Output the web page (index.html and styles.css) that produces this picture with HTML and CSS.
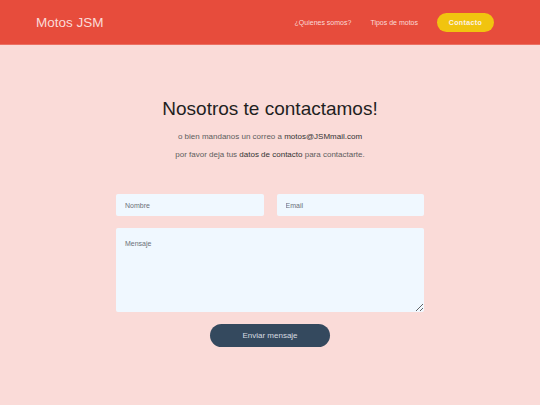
FILE: index.html
```html
<!DOCTYPE html>
<html lang="es">
<head>
<meta charset="utf-8">
<title>Motos JSM</title>
<link rel="stylesheet" href="styles.css">
</head>
<body>
<header class="header">
  <div class="logo">Motos JSM</div>
  <nav class="nav">
    <a class="nav-link" href="#">¿Quienes somos?</a>
    <a class="nav-link" href="#">Tipos de motos</a>
    <a class="nav-btn" href="#">Contacto</a>
  </nav>
</header>
<main class="main">
  <h1 class="title">Nosotros te contactamos!</h1>
  <p class="text">o bien mandanos un correo a <span class="strong">motos@JSMmail.com</span></p>
  <p class="text">por favor deja tus <span class="strong">datos de contacto</span> para contactarte.</p>
  <form class="form">
    <div class="row">
      <input class="field" type="text" placeholder="Nombre">
      <input class="field" type="email" placeholder="Email">
    </div>
    <textarea class="field area" placeholder="Mensaje"></textarea>
    <button class="send" type="button">Enviar mensaje</button>
  </form>
</main>
</body>
</html>
```
FILE: styles.css
```css
* { box-sizing: border-box; }
body {
  margin: 0;
  background: #fadbd8;
  font-family: "Liberation Sans", Arial, sans-serif;
  min-height: 405px;
}
.header {
  height: 45px;
  background: #e74c3c;
  border-bottom: 1px solid #ec7063;
  display: flex;
  align-items: center;
  justify-content: space-between;
  padding: 0 46px 0 36px;
}
.logo {
  color: #fadbd8;
  font-size: 13.5px;
  font-weight: 400;
}
.nav {
  display: flex;
  align-items: center;
}
.nav-link {
  color: #fadbd8;
  font-size: 7px;
  text-decoration: none;
  margin-right: 19px;
}
.nav-btn {
  background: #f1c40f;
  color: #fdf2e9;
  font-size: 7px;
  font-weight: 700;
  letter-spacing: 0.4px;
  text-decoration: none;
  width: 57px;
  height: 19px;
  border-radius: 10px;
  display: flex;
  align-items: center;
  justify-content: center;
}
.main {
  display: flex;
  flex-direction: column;
  align-items: center;
  padding-top: 52px;
}
.title {
  margin: 0;
  font-size: 19px;
  font-weight: 400;
  color: #1f1f1f;
  line-height: 24px;
}
.text {
  margin: 0;
  font-size: 8px;
  color: #5d5d5d;
  line-height: 10px;
}
.title + .text { margin-top: 11px; }
.text + .text { margin-top: 8px; }
.strong { color: #333; }
.form {
  width: 308px;
  margin-top: 34px;
  display: flex;
  flex-direction: column;
  align-items: center;
}
.row {
  width: 100%;
  display: flex;
  gap: 13px;
}
.field {
  flex: 1;
  min-width: 0;
  height: 22px;
  background: #f0f8ff;
  border: none;
  border-radius: 2px;
  padding: 0 9px;
  font-family: inherit;
  font-size: 7px;
  color: #333;
  outline: none;
}
.field::placeholder { color: #6b6f78; }
.area {
  width: 100%;
  flex: none;
  height: 84px;
  margin-top: 12px;
  padding: 12px 9px;
  resize: vertical;
}
.send {
  margin-top: 12px;
  width: 120px;
  height: 23px;
  border: none;
  border-radius: 12px;
  background: #34495e;
  color: #d6dbe0;
  font-family: inherit;
  font-size: 8px;
}
```
